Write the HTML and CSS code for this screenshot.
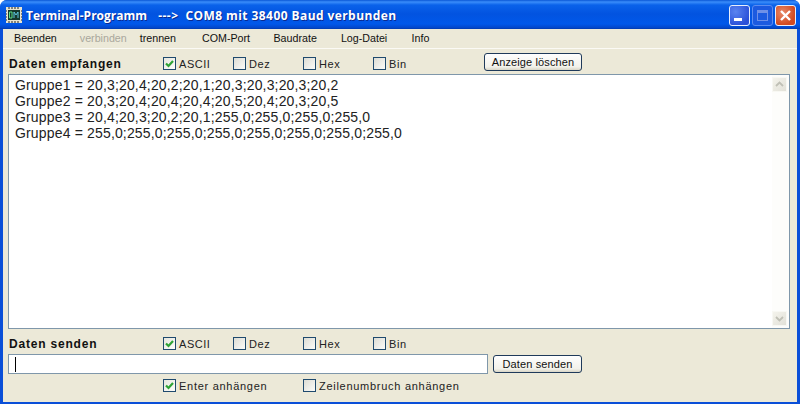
FILE: index.html
```html
<!DOCTYPE html>
<html lang="de">
<head>
<meta charset="utf-8">
<title>Terminal-Programm</title>
<link rel="stylesheet" href="styles.css">
</head>
<body>
<div class="window">
  <header class="titlebar">
    <svg class="appicon" width="16" height="16" viewBox="0 0 16 16">
      <rect x="0" y="0" width="16" height="16" fill="#e8e4d0"/>
      <path d="M0 4h1M0 7h1M0 10h1M0 13h1M15 4h1M15 7h1M15 10h1M15 13h1" stroke="#222" stroke-width="1"/>
      <path d="M3 0v2M6 0v2M9 0v2M12 0v2M3 14v2M6 14v2M9 14v2M12 14v2" stroke="#222" stroke-width="1"/>
      <rect x="2" y="3" width="12" height="10" fill="#16382c"/>
      <path d="M3.5 5v6M3.5 5h2.5v6H3.5" stroke="#5fe08a" stroke-width="1" fill="none"/>
      <path d="M8 11V5l2 3 2-3v6" stroke="#5fc8e0" stroke-width="1" fill="none"/>
    </svg>
    <div class="title"><span class="title-app">Terminal-Programm</span>&nbsp; <span class="title-status">---&gt; &nbsp;COM8 mit 38400 Baud verbunden</span></div>
    <div class="winbtns">
      <div class="wb wb-min"><span class="min-glyph"></span></div>
      <div class="wb wb-max"><span class="max-glyph"></span></div>
      <div class="wb wb-close">
        <svg width="13" height="13" viewBox="0 0 13 13"><path d="M2 2l9 9M11 2l-9 9" stroke="#fff" stroke-width="2.4"/></svg>
      </div>
    </div>
  </header>
  <div class="client">
    <nav class="menu">
      <span class="mi mi-1">Beenden</span>
      <span class="mi mi-2 disabled">verbinden</span>
      <span class="mi mi-3">trennen</span>
      <span class="mi mi-4">COM-Port</span>
      <span class="mi mi-5">Baudrate</span>
      <span class="mi mi-6">Log-Datei</span>
      <span class="mi mi-7">Info</span>
    </nav>
    <div class="content">
      <div class="row row-recv">
        <div class="grouplabel">Daten empfangen</div>
        <label class="cb"><span class="box on"><svg width="11" height="11" viewBox="0 0 11 11"><path d="M2 5.5l2.5 2.5 4.5-5" stroke="#2fa335" stroke-width="2.2" fill="none"/></svg></span>ASCII</label>
        <label class="cb"><span class="box"></span>Dez</label>
        <label class="cb"><span class="box"></span>Hex</label>
        <label class="cb"><span class="box"></span>Bin</label>
        <button class="btn btn-clear">Anzeige löschen</button>
      </div>
      <div class="output">
        <div class="lines">
          <div>Gruppe1 = 20,3;20,4;20,2;20,1;20,3;20,3;20,3;20,2</div>
          <div>Gruppe2 = 20,3;20,4;20,4;20,4;20,5;20,4;20,3;20,5</div>
          <div>Gruppe3 = 20,4;20,3;20,2;20,1;255,0;255,0;255,0;255,0</div>
          <div>Gruppe4 = 255,0;255,0;255,0;255,0;255,0;255,0;255,0;255,0</div>
        </div>
        <div class="scrollbar">
          <div class="sbtn"><svg width="9" height="7" viewBox="0 0 9 7"><path d="M1 5l3.5-3.5L8 5" stroke="#c0c0b6" stroke-width="1.8" fill="none"/></svg></div>
          <div class="sbtn"><svg width="9" height="7" viewBox="0 0 9 7"><path d="M1 2l3.5 3.5L8 2" stroke="#c0c0b6" stroke-width="1.8" fill="none"/></svg></div>
        </div>
      </div>
      <div class="row row-send">
        <div class="grouplabel">Daten senden</div>
        <label class="cb"><span class="box on"><svg width="11" height="11" viewBox="0 0 11 11"><path d="M2 5.5l2.5 2.5 4.5-5" stroke="#2fa335" stroke-width="2.2" fill="none"/></svg></span>ASCII</label>
        <label class="cb"><span class="box"></span>Dez</label>
        <label class="cb"><span class="box"></span>Hex</label>
        <label class="cb"><span class="box"></span>Bin</label>
      </div>
      <div class="input-row">
        <div class="input"><span class="caret"></span></div>
        <button class="btn btn-send">Daten senden</button>
      </div>
      <div class="row row-opts">
        <div></div>
        <label class="cb cb-wide"><span class="box on"><svg width="11" height="11" viewBox="0 0 11 11"><path d="M2 5.5l2.5 2.5 4.5-5" stroke="#2fa335" stroke-width="2.2" fill="none"/></svg></span>Enter anhängen</label>
        <label class="cb cb-wide"><span class="box"></span>Zeilenumbruch anhängen</label>
      </div>
    </div>
  </div>
</div>
</body>
</html>
```
FILE: styles.css
```css
* { box-sizing: border-box; }
html, body { margin: 0; padding: 0; background: #fff; }
body { width: 801px; height: 405px; overflow: hidden; font-family: "DejaVu Sans", sans-serif; }

.window {
  width: 800px;
  height: 404px;
  display: flex;
  flex-direction: column;
  background: #0a4fd8;
  border-radius: 7px 7px 0 0;
  overflow: hidden;
}

.titlebar {
  height: 29px;
  flex: none;
  display: flex;
  align-items: center;
  padding: 0 4px 0 6px;
  background: linear-gradient(to bottom, #0a57d6 0, #3a8dfa 2px, #0a62ea 5px, #0253e0 14px, #0058ea 24px, #0346c8 28px, #0038a8 29px);
}
.appicon { flex: none; margin-right: 4px; }
.title {
  flex: 1;
  color: #fff;
  font-family: "Open Sans", sans-serif;
  font-weight: 700;
  font-size: 12px;
  white-space: nowrap;
  text-shadow: 1px 1px 0 #0a2a90;
  margin-top: 2px;
}
.title-status { letter-spacing: 0.42px; margin-left: 5px; }
.winbtns { display: flex; gap: 2px; margin-top: 1px; }
.wb {
  width: 21px;
  height: 21px;
  border: 1px solid #e8eefc;
  border-radius: 3px;
  position: relative;
  display: flex;
  align-items: center;
  justify-content: center;
}
.wb-min { background: radial-gradient(circle at 30% 30%, #5a84f0, #2a50d8 75%); }
.wb-max { background: #1c5ae0; border-color: #5c8cf0; }
.wb-close { background: radial-gradient(circle at 35% 35%, #e88a6a, #d24a20 70%); }
.min-glyph { position: absolute; left: 4px; bottom: 4px; width: 8px; height: 3px; background: #fff; }
.max-glyph { width: 11px; height: 11px; border: 1px solid #6f90e8; border-top-width: 3px; }

.client {
  flex: 1;
  margin: 0 3px 2px 3px;
  background: #ece9d8;
  display: flex;
  flex-direction: column;
  min-height: 0;
}

.menu {
  height: 20px;
  flex: none;
  border-bottom: 1px solid #fbfaf5;
  color: #111;
  font-family: "Liberation Sans", sans-serif;
  display: flex;
  align-items: center;
  font-size: 10.7px;
}
.mi { white-space: nowrap; margin-top: -1px; }
.mi-1 { margin-left: 11px; }
.mi-2 { margin-left: 23px; }
.mi-3 { margin-left: 13px; }
.mi-4 { margin-left: 26px; }
.mi-5 { margin-left: 23.4px; }
.mi-6 { margin-left: 24px; }
.mi-7 { margin-left: 24.3px; }
.disabled { color: #a9a79c; }

.content { flex: 1; display: flex; flex-direction: column; padding: 0 7px 0 5px; min-height: 0; }

.row {
  display: grid;
  grid-template-columns: 154px 70px 70px 70px 111px auto;
  align-items: center;
  flex: none;
  padding-left: 1px;
}
.row-recv { height: 25px; padding-top: 4px; }
.row-send { height: 25px; padding-top: 4px; }
.row-opts { height: 23px; grid-template-columns: 154px 140px auto; }

.grouplabel {
  font-size: 12px;
  font-weight: 700;
  letter-spacing: 0.8px;
  color: #111;
  font-family: "Liberation Sans", sans-serif;
}

.cb {
  display: flex;
  align-items: center;
  font-size: 11px;
  color: #222;
  font-family: "Liberation Sans", sans-serif;
  letter-spacing: 0.55px;
  white-space: nowrap;
}
.cb-wide { letter-spacing: 0.72px; }
.box {
  width: 13px;
  height: 13px;
  flex: none;
  margin-right: 3px;
  border: 1px solid #1f4a6e;
  background: linear-gradient(135deg, #dcdcd4, #fbfbf8);
  display: flex;
  align-items: center;
  justify-content: center;
}
.box.on { background: linear-gradient(135deg, #e6e6dd, #fdfdfb); }

.btn {
  font-family: "Liberation Sans", sans-serif;
  font-size: 11px;
  color: #111;
  height: 18px;
  padding: 0;
  border: 1px solid #1f3a5a;
  border-radius: 3px;
  background: linear-gradient(to bottom, #fefefe, #f2f1ea 80%, #d8d5c6);
  letter-spacing: 0.12px;
}
.btn-clear { width: 98px; margin-bottom: 3px; }
.btn-send { width: 89px; }

.output {
  height: 255px;
  flex: none;
  border: 1px solid #7f97aa;
  background: #fff;
  display: flex;
  min-height: 0;
}
.lines {
  flex: 1;
  padding: 2px 0 0 6px;
  font-family: "Liberation Sans", sans-serif;
  font-size: 14px;
  letter-spacing: 0.16px;
  line-height: 16px;
  color: #222;
}
.scrollbar {
  width: 17px;
  padding: 2px 2px 2px 0;
  background: #fdfdfb;
  display: flex;
  flex-direction: column;
  justify-content: space-between;
}
.sbtn {
  height: 15px;
  background: linear-gradient(135deg, #f4f3ec, #e2e1d8);
  border: 1px solid #f8f8f3;
  display: flex;
  align-items: center;
  justify-content: center;
}

.input-row { display: flex; align-items: center; gap: 5px; flex: none; height: 20px; }
.input {
  width: 480px;
  height: 20px;
  border: 1px solid #7f97aa;
  background: #fff;
  display: flex;
  align-items: center;
  padding-left: 6px;
}
.caret { width: 1px; height: 15px; background: #000; }
```
